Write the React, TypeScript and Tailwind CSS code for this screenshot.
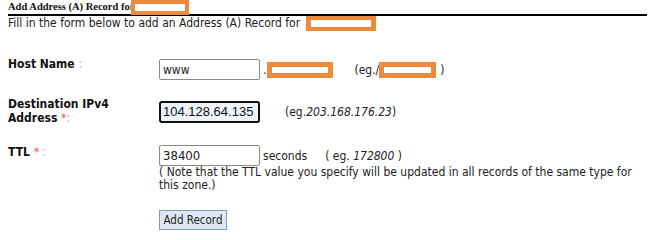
export default function App() {
    return (
        <div className="w-[655px] h-[240px] bg-white overflow-hidden relative font-['DejaVu_Sans_Condensed','DejaVu_Sans',Verdana,sans-serif] text-[12px] text-[#222]">
            <div className="pl-2 pr-2">
                <div className="flex items-end border-b-2 border-black h-[16px] font-['Liberation_Serif',serif] font-bold text-[10.5px] leading-[12px] text-[#111]">
                    <span className="pb-[1px]">Add Address (A) Record for</span>
                    <span className="ml-[-3px] self-start w-[58px] h-[15px] bg-[#ee8a3c] p-[4px]">
                        <span className="block w-full h-full bg-white" />
                    </span>
                </div>
                <div className="flex items-center leading-[15px] text-[12px]">
                    Fill in the form below to add an Address (A) Record for
                    <span className="ml-[6px] w-[70px] h-[15px] bg-[#ee8a3c] px-[5px] py-[4px]">
                        <span className="block w-full h-full bg-white" />
                    </span>
                </div>
            </div>

            <div className="grid grid-cols-[151px_1fr] pl-2 mt-[28px]">
                <div className="mt-[-2px] font-bold text-[#111] leading-[14px]">
                    Host Name <span className="font-normal text-[#aaa]">:</span>
                </div>
                <div className="flex items-center">
                    <input
                        defaultValue="www"
                        className="w-[101px] h-[21px] border border-[#8a8a8a] rounded-[2px] px-[3px] text-[12px] font-['DejaVu_Sans_Condensed','DejaVu_Sans',sans-serif] outline-none"
                    />
                    <span className="ml-[3px]">.</span>
                    <span className="ml-[1px] w-[66px] h-[16px] bg-[#ee8a3c] px-[5px] py-[5px]">
                        <span className="block w-full h-full bg-white" />
                    </span>
                    <span className="ml-[21px]">(eg./</span>
                    <span className="w-[57px] h-[16px] bg-[#ee8a3c] px-[5px] py-[5px]">
                        <span className="block w-full h-full bg-white" />
                    </span>
                    <span className="ml-[4px]">)</span>
                </div>

                <div className="mt-[17px] font-bold text-[#111] leading-[14px]">
                    Destination IPv4<br />
                    Address <span className="font-normal text-[#e06666]">*</span><span className="font-normal text-[#aaa]">:</span>
                </div>
                <div className="mt-[18px] flex items-center">
                    <input
                        defaultValue="104.128.64.135"
                        className="w-[101px] h-[22px] border-2 border-[#111] rounded-[3px] bg-[#eef3fa] px-[2px] text-[13px] font-['Liberation_Sans',Arial,sans-serif] text-[#111] outline-none"
                    />
                    <span className="ml-[25px]">
                        (eg.<i>203.168.176.23</i>)
                    </span>
                </div>

                <div className="mt-[20px] font-bold text-[#111] leading-[14px]">
                    TTL <span className="font-normal text-[#e06666]">*</span><span className="font-normal text-[#aaa]"> :</span>
                </div>
                <div className="mt-[20px]">
                    <div className="flex items-center">
                        <input
                            defaultValue="38400"
                            className="w-[101px] h-[21px] border border-[#8a8a8a] rounded-[2px] px-[3px] text-[13px] font-['DejaVu_Sans_Condensed','DejaVu_Sans',sans-serif] outline-none"
                        />
                        <span className="ml-[3px]">seconds</span>
                        <span className="ml-[18px]">
                            ( eg. <i>172800</i> )
                        </span>
                    </div>
                    <p className="leading-[13px] pr-[20px]">
                        ( Note that the TTL value you specify will be updated in all records of the same type for this zone.)
                    </p>
                    <button className="mt-[18px] h-[20px] w-[68px] bg-[#dde8f4] border border-[#7f9db9] text-[11.5px] text-[#222] leading-[16px] font-['DejaVu_Sans_Condensed','DejaVu_Sans',sans-serif]">
                        Add Record
                    </button>
                </div>
            </div>
        </div>
    )
}
